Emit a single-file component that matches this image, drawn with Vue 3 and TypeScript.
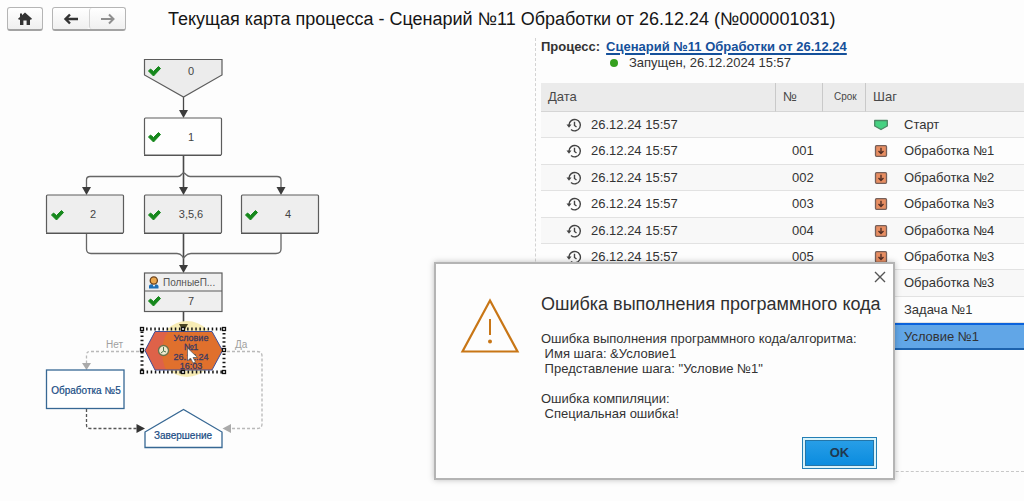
<script setup lang="ts">
import { ref } from 'vue'

interface Step {
  date?: string
  no?: string
  name: string
  kind: 'start' | 'work'
}

const steps: Step[] = [
  { date: '26.12.24 15:57', name: 'Старт', kind: 'start' },
  { date: '26.12.24 15:57', no: '001', name: 'Обработка №1', kind: 'work' },
  { date: '26.12.24 15:57', no: '002', name: 'Обработка №2', kind: 'work' },
  { date: '26.12.24 15:57', no: '003', name: 'Обработка №3', kind: 'work' },
  { date: '26.12.24 15:57', no: '004', name: 'Обработка №4', kind: 'work' },
  { date: '26.12.24 15:57', no: '005', name: 'Обработка №3', kind: 'work' },
  { name: 'Обработка №3', kind: 'work' },
  { name: 'Задача №1', kind: 'work' },
  { name: 'Условие №1', kind: 'work' },
]

const boxes = [
  { x: 144, y: 118, w: 77, h: 37, label: '1', fill: '#fefefe' },
  { x: 46, y: 195, w: 77, h: 38, label: '2', fill: '#eeeeee' },
  { x: 144, y: 195, w: 77, h: 38, label: '3,5,6', fill: '#eeeeee' },
  { x: 241, y: 195, w: 77, h: 38, label: '4', fill: '#eeeeee' },
]

const checks = [
  { x: 148, y: 66 },
  { x: 148, y: 132 },
  { x: 51, y: 210 },
  { x: 148, y: 210 },
  { x: 245, y: 210 },
  { x: 148, y: 296 },
]

const downArrows = [
  { x: 183.5, y: 118 },
  { x: 86.5, y: 195 },
  { x: 183.5, y: 195 },
  { x: 281, y: 195 },
  { x: 183.5, y: 273 },
]

const handles = [
  [142, 329], [183, 329], [224, 329],
  [142, 350], [224, 350],
  [142, 372], [183, 372], [224, 372],
]

const selected = ref(8)
const dialogOpen = ref(true)
</script>

<template>
  <div class="page">
    <header class="bar">
      <button class="tool home" type="button" aria-label="Начальная страница">
        <svg width="16" height="14" viewBox="0 0 16 14"><path d="M8 0.500 15 6.800 13.800 8 13 7.300V13H9.600V8.600H6.400V13H3V7.300L2.200 8 1 6.800 3 5V1.400H5V3.200Z" fill="#333" /></svg>
      </button>
      <div class="nav">
        <button class="tool" type="button" aria-label="Назад">
          <svg width="16" height="12" viewBox="0 0 16 12"><path d="M7 1.500 2.500 6 7 10.500M3 6H15" fill="none" stroke="#333" stroke-width="2.400" /></svg>
        </button>
        <button class="tool" type="button" aria-label="Вперед">
          <svg width="16" height="12" viewBox="0 0 16 12"><path d="M9 1.500 13.500 6 9 10.500M13 6H1" fill="none" stroke="#8f8f8f" stroke-width="2" /></svg>
        </button>
      </div>
      <h1>Текущая карта процесса - Сценарий №11 Обработки от 26.12.24 (№000001031)</h1>
    </header>

    <main class="body">
      <section class="map" aria-label="Карта процесса">
        <svg width="340" height="426" viewBox="0 38 340 426">
          <g fill="none" stroke="#484848" stroke-width="1.300">
            <path d="M183.500 97V111" />
            <path d="M183.500 155V188M183.500 233V266M183.500 311V325" stroke-width="1.600" />
            <path d="M86.500 188V180Q86.500 176.500 90 176.500H178Q180 176.500 181.500 174.500Q183.500 171.500 186 174.500Q188 176.500 190 176.500H277Q281 176.500 281 180V188" stroke="#666" />
            <path d="M86.500 233V249Q86.500 253.500 91 253.500H177Q181 253.500 183.500 258Q187 253.500 191 253.500H276Q281 253.500 281 249V233" stroke="#666" />
          </g>
          <path v-for="a in downArrows" :key="`${a.x}-${a.y}`" :d="`M${a.x - 4.5} ${a.y - 8}H${a.x + 4.5}L${a.x} ${a.y}Z`" fill="#3c3c3c" />

          <path d="M144.500 59.500H222V75L183.500 97 144.500 75Z" fill="#ececec" stroke="#5c5c5c" stroke-width="1.200" />
          <text class="num" x="191" y="75">0</text>

          <g v-for="b in boxes" :key="b.label">
            <rect :x="b.x + 0.5" :y="b.y" :width="b.w" :height="b.h" rx="1" :fill="b.fill" stroke="#5c5c5c" stroke-width="1.200" />
            <path :d="`M${b.x} ${b.y + b.h + 0.5}h${b.w}`" stroke="#555" />
            <text class="num" :x="b.x + 47" :y="b.y + 23">{{ b.label }}</text>
          </g>

          <rect x="144.500" y="273" width="77.500" height="38.500" fill="#efefef" stroke="#5c5c5c" stroke-width="1.200" />
          <path d="M145 291H222" stroke="#5c5c5c" stroke-width="1.200" />
          <path d="M149 288.500V286Q149 284 153.500 284T158.500 286V288.500Z" fill="#1d6fb5" />
          <path d="M152 283.500H156L154 287Z" fill="#fff" />
          <circle cx="153.800" cy="280.500" r="3.600" fill="#eba84e" stroke="#6b421b" stroke-width="1.300" />
          <text class="owner" x="163" y="286">ПолныеП...</text>
          <text class="num" x="191" y="305">7</text>

          <path v-for="c in checks" :key="`${c.x}-${c.y}`" :d="`M${c.x + 0.5} ${c.y + 5}l2 -2 3 2.500 5 -5 2 2 -7 7.500Z`" fill="#16881c" stroke="#16881c" stroke-linejoin="round" />

          <rect x="142" y="329" width="82" height="43" fill="none" stroke="#fff" stroke-width="4" />
          <circle cx="187" cy="349" r="28" fill="#f7ecb5" />
          <path d="M155 331.500H212L222.500 350.500 212 370H155L145 350.500Z" fill="#e0702d" />
          <path d="M155 331.500H168Q157 349 166 370H155L145 350.500Z" fill="#de6249" />
          <path d="M155 331.500H212L222.500 350.500 212 370H155L145 350.500Z" fill="none" stroke="#3f4f9b" />
          <path d="M179 324H188L183.500 332Z" fill="#4b4624" />
          <g class="cond">
            <text x="191" y="341">Условие</text>
            <text x="191" y="350">№1</text>
            <text x="191" y="360">26.12.24</text>
            <text x="191" y="369">16:03</text>
          </g>
          <circle cx="163.500" cy="350.500" r="5" fill="#eee9cf" stroke="#68724b" stroke-width="1.300" />
          <path d="M163.500 347V351L161 353M163.500 351L166 352" fill="none" stroke="#4f744d" />
          <rect x="142" y="329" width="82" height="43" fill="none" stroke="#161616" stroke-width="3" stroke-dasharray="1.500 2.600" />
          <rect v-for="h in handles" :key="h.join('-')" :x="h[0] - 1.5" :y="h[1] - 1.5" width="3" height="3" fill="#fff" stroke="#111" stroke-width="1.300" />
          <path d="M187.500 348V361L190.500 358 193 363 195.500 362 193 357.500H197.500Z" fill="#fff" stroke="#555" stroke-width="0.700" />

          <g fill="none" stroke="#b9b9b9" stroke-width="1.300" stroke-dasharray="3 2">
            <path d="M139 351.500H90Q86.500 351.500 86.500 355V363" />
            <path d="M227 351.500H257Q262 351.500 262 356V424Q262 428.500 257 428.500H230" />
          </g>
          <path d="M82 363H91L86.500 370ZM222.500 428.500L231 424V433Z" fill="#aaa" />
          <text class="branch" x="106" y="348">Нет</text>
          <text class="branch" x="235" y="348">Да</text>

          <rect x="46.500" y="370" width="77.500" height="38.500" fill="#fff" stroke="#376894" stroke-width="1.300" />
          <text class="step" x="86" y="394">Обработка №5</text>
          <path d="M86.500 409V425Q86.500 428.500 90 428.500H138" fill="none" stroke="#555" stroke-width="1.300" stroke-dasharray="3 2" />
          <path d="M136.500 424V433L145 428.500Z" fill="#333" />
          <path d="M145 432L183.500 409.500 222 432V447.500H145Z" fill="#fff" stroke="#376894" stroke-width="1.300" />
          <text class="step" x="183" y="439">Завершение</text>
        </svg>
      </section>

      <section class="details" aria-label="Шаги процесса">
        <div class="process">
          <span class="label">Процесс:</span>
          <a href="#process">Сценарий №11 Обработки от 26.12.24</a>
        </div>
        <div class="state"><i class="dot"></i><span>Запущен, 26.12.2024 15:57</span></div>
        <table>
          <colgroup><col class="c-date" /><col class="c-no" /><col class="c-due" /><col /></colgroup>
          <thead>
            <tr><th>Дата</th><th>№</th><th class="due">Срок</th><th>Шаг</th></tr>
          </thead>
          <tbody>
            <tr v-for="(s, i) in steps" :key="i" :class="{ selected: selected === i }" @click="selected = i">
              <td>
                <div v-if="s.date" class="date">
                  <svg width="16" height="16" viewBox="0 0 16 16"><path d="M3 8A5.700 5.700 0 1 1 5 12.500M8.500 4.800V8.500L10.500 10" fill="none" stroke="#444" stroke-width="1.400" /><path d="M0.500 7.500H5.500L3 10.800Z" fill="#444" /></svg>
                  <span>{{ s.date }}</span>
                </div>
              </td>
              <td class="no">{{ s.no }}</td>
              <td></td>
              <td>
                <div class="name">
                  <svg v-if="s.kind === 'start'" width="14" height="12" viewBox="0 0 14 12"><path d="M0.700 1.500H13.300V7L7 10.500 0.700 7Z" fill="#46d282" stroke="#4d8765" stroke-width="1.300" stroke-linejoin="round" /></svg>
                  <svg v-else width="14" height="12" viewBox="0 0 14 12"><rect x="1.500" y="0.700" width="11" height="10.600" rx="1" fill="#e88e62" stroke="#76605a" stroke-width="1.300" /><path d="M7 2.800V8M4.500 6L7 8.500 9.500 6" fill="none" stroke="#532f25" stroke-width="1.400" /></svg>
                  <span>{{ s.name }}</span>
                </div>
              </td>
            </tr>
          </tbody>
        </table>
      </section>
    </main>

    <div v-if="dialogOpen" class="dialog" role="dialog" aria-labelledby="error-title">
      <svg class="warn" width="60" height="56" viewBox="0 0 60 56"><path d="M30 2.500 57.500 53.500H2.500Z" fill="none" stroke="#c87616" stroke-width="2.200" /><path d="M30 21V37" stroke="#c87616" stroke-width="2" /><circle cx="30" cy="43.500" r="2" fill="#c87616" /></svg>
      <div class="message">
        <h2 id="error-title">Ошибка выполнения программного кода</h2>
        <pre>Ошибка выполнения программного кода/алгоритма:
 Имя шага: &amp;Условие1
 Представление шага: "Условие №1"

Ошибка компиляции:
 Специальная ошибка!</pre>
        <button class="ok" type="button" @click="dialogOpen = false">OK</button>
      </div>
      <button class="close" type="button" aria-label="Закрыть" @click="dialogOpen = false">
        <svg width="12" height="12" viewBox="0 0 12 12"><path d="M1 1 11 11M11 1 1 11" stroke="#555" stroke-width="1.400" /></svg>
      </button>
    </div>
  </div>
</template>

<style>
body {
  background: #fdfdfd;
}
</style>

<style scoped>
.page {
  position: relative;
  display: flex;
  flex-direction: column;
  min-height: 100vh;
  box-sizing: border-box;
  padding-bottom: 29px;
  overflow: hidden;
  font: 13px/16px "Liberation Sans", Arial, sans-serif;
  color: #333;
}
button {
  padding: 0;
  font: inherit;
  cursor: pointer;
}
.bar {
  display: flex;
  align-items: center;
  height: 38px;
  padding-left: 7px;
}
.tool {
  display: flex;
  align-items: center;
  justify-content: center;
  width: 36px;
  height: 22px;
  border: 0;
  border-radius: 3px;
  background: linear-gradient(#fff, #f0f0f0);
}
.home,
.nav {
  box-sizing: border-box;
  height: 24px;
  border: 1px solid #b5b5b5;
  border-bottom: 2px solid #a3a3a3;
  border-radius: 3px;
}
.nav {
  display: flex;
  margin: 0 42px 0 9px;
}
.nav .tool {
  height: 21px;
}
.nav .tool + .tool {
  border-left: 1px solid #d2d2d2;
}
h1 {
  margin: 0;
  font-size: 18px;
  line-height: 20px;
  font-weight: 400;
  color: #151515;
  white-space: nowrap;
}
.body {
  flex: 1;
  display: grid;
  grid-template-columns: 535px 1fr;
}
.map svg {
  display: block;
}
.num,
.cond,
.step {
  text-anchor: middle;
}
.num {
  font-size: 11px;
  fill: #444;
}
.owner {
  font-size: 10px;
  fill: #555;
}
.branch {
  font-size: 10px;
  fill: #a0a0a0;
}
.step {
  font-size: 10px;
  fill: #174b83;
  stroke: #174b83;
  stroke-width: 0.2px;
}
.cond {
  font-size: 9px;
  fill: #3c3a60;
  stroke: #3c3a60;
  stroke-width: 0.3px;
}
.details {
  padding-left: 5px;
  border-left: 1px dashed #d3d3d3;
  border-bottom: 1px dashed #c8c8c8;
}
.process {
  display: flex;
  gap: 6px;
  padding-top: 1px;
  font-weight: 700;
}
.process a {
  color: #15509a;
  text-decoration-thickness: 2px;
  text-underline-offset: 2px;
}
.state {
  display: flex;
  align-items: center;
  gap: 11px;
  padding-left: 69px;
}
.dot {
  width: 8px;
  height: 8px;
  border-radius: 50%;
  background: #35a01e;
}
table {
  width: 100%;
  margin-top: 12px;
  border-collapse: separate;
  border-spacing: 0;
  table-layout: fixed;
}
.c-date {
  width: 234px;
}
.c-no {
  width: 47px;
}
.c-due {
  width: 43px;
}
th {
  box-sizing: border-box;
  height: 29px;
  padding: 0 7px;
  border-bottom: 1px solid #d5d5d5;
  background: #ebebeb;
  text-align: left;
  font-weight: 400;
  color: #484848;
}
th + th {
  border-left: 1px solid #c9c9c9;
}
.due {
  padding: 0 0 0 11px;
  font-size: 10px;
}
td {
  box-sizing: border-box;
  height: 26px;
  padding: 0;
  border-bottom: 1px solid #e2e2e2;
}
tr:nth-child(5n + 2) td,
tr:nth-child(5n + 4) td {
  height: 27px;
}
tbody tr:nth-child(odd) {
  background: #f8f8f8;
}
.date {
  display: flex;
  align-items: center;
  gap: 9px;
  padding-left: 25px;
}
.no {
  padding-left: 17px;
}
.name {
  display: flex;
  align-items: center;
  gap: 16px;
  padding-left: 9px;
}
tbody tr.selected {
  background: #61a6e7;
}
.selected td {
  border-top: 2px solid #0b63dc;
  border-bottom: 2px solid #1d62ad;
}
.dialog {
  position: absolute;
  top: 262px;
  left: 434px;
  display: flex;
  box-sizing: border-box;
  width: 461px;
  padding: 29px 16px 9px 24px;
  gap: 21px;
  border: 2px solid #b4b4b4;
  background: #fdfdfd;
  box-shadow: 0 0 6px rgba(0, 0, 0, 0.25);
}
.warn {
  flex: none;
  margin-top: 5px;
}
.message {
  flex: 1;
  min-width: 0;
  display: flex;
  flex-direction: column;
}
h2 {
  margin: 0 0 16px;
  font-size: 18px;
  line-height: 22px;
  font-weight: 400;
  color: #303030;
  white-space: nowrap;
}
pre {
  margin: 0 0 16px;
  font: 13px/15px "Liberation Sans", Arial, sans-serif;
}
.ok {
  align-self: flex-end;
  width: 75px;
  height: 32px;
  border: 1px solid #247fb5;
  background: linear-gradient(#2ba0e8, #078ade);
  box-shadow: inset 0 0 0 2px #d9f3fa, inset 0 0 0 3px #2475a8;
  font-weight: 700;
  color: #20384f;
}
.close {
  position: absolute;
  top: 7px;
  right: 7px;
  display: flex;
  border: 0;
  background: none;
}
</style>
